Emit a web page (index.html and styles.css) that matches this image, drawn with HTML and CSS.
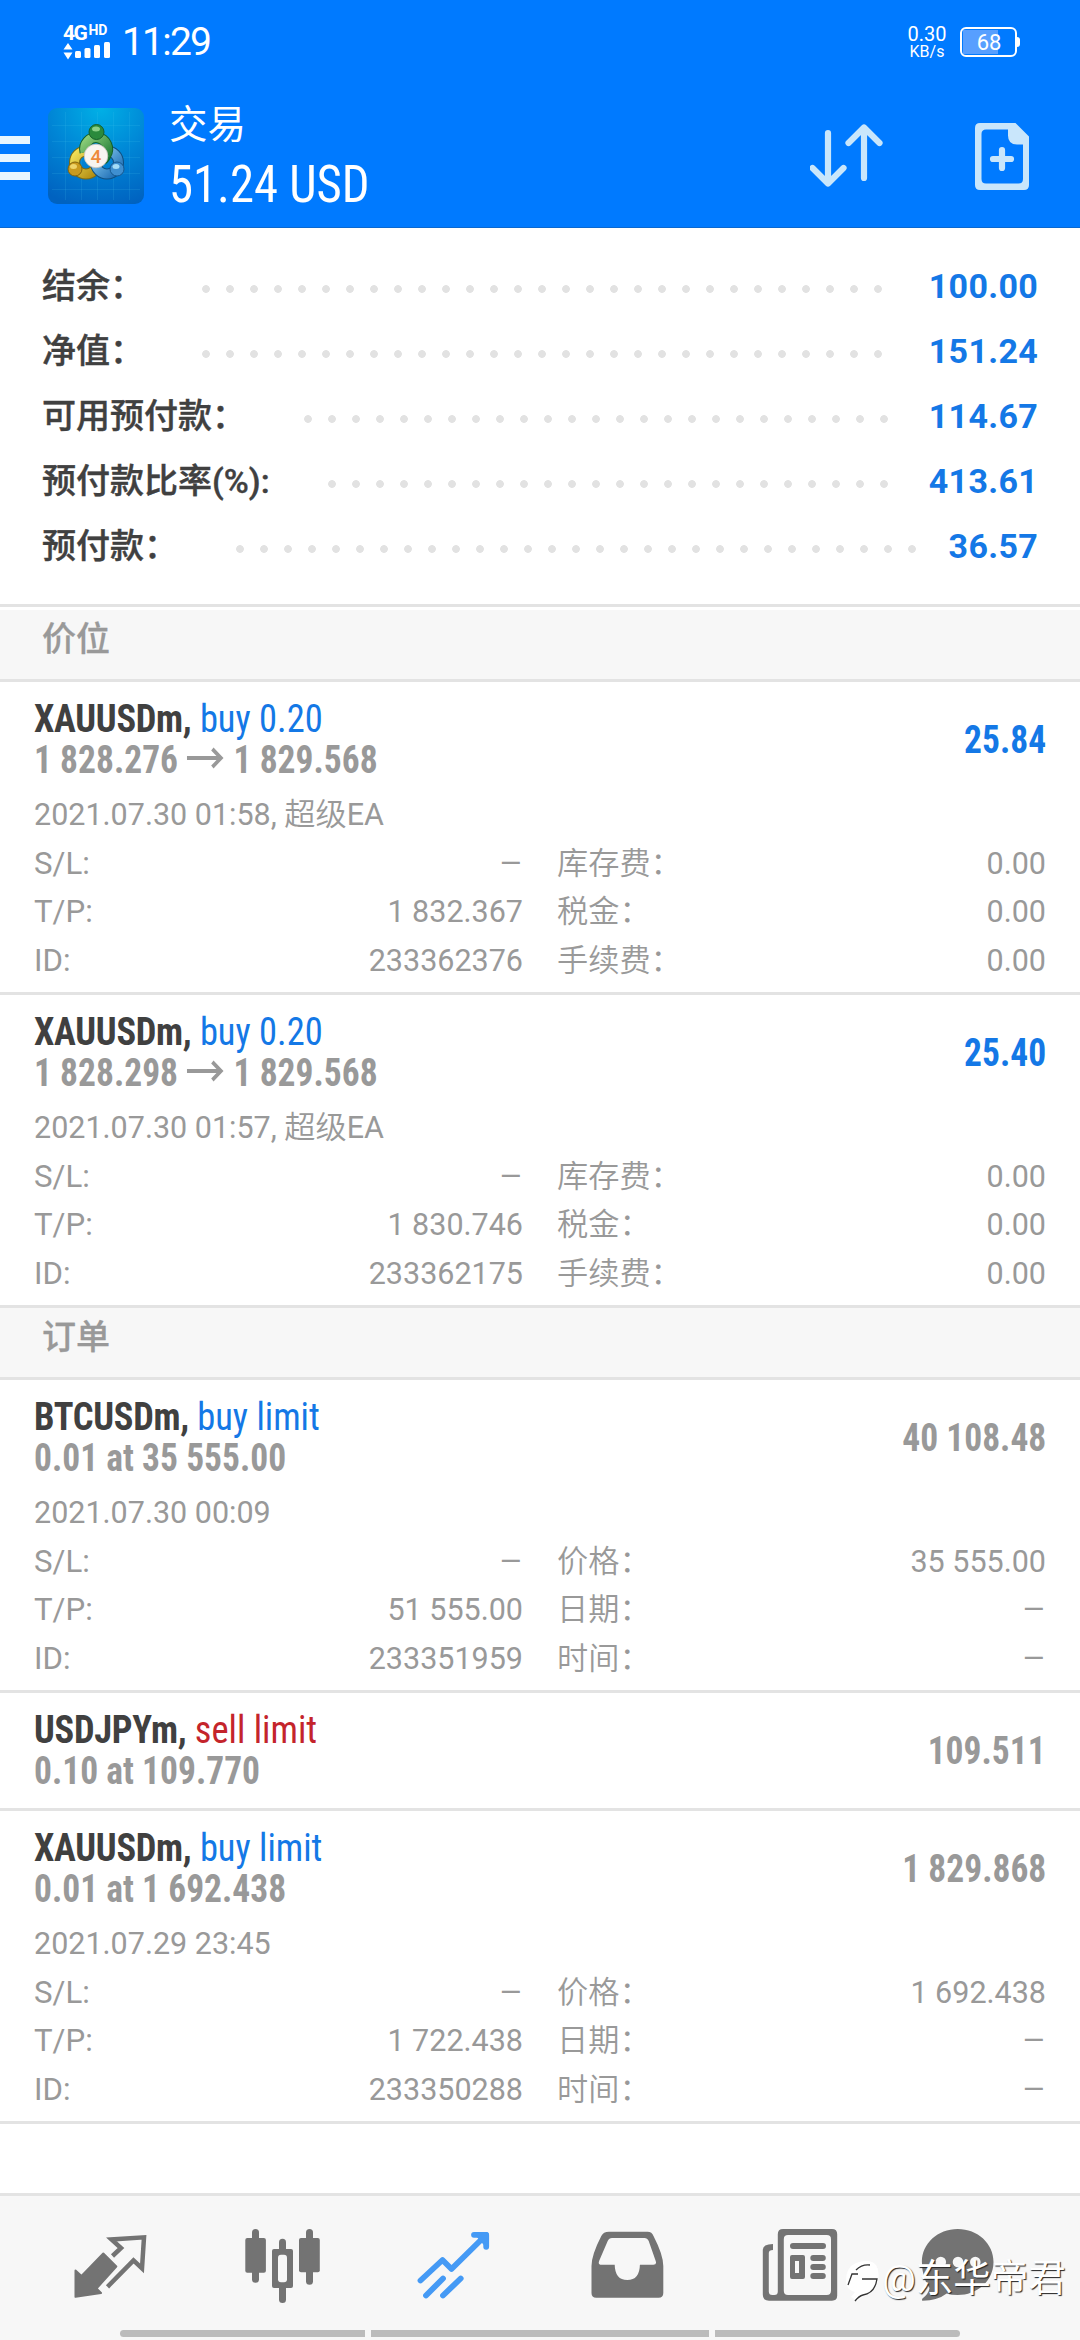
FILE: index.html
```
<!DOCTYPE html>
<html lang="zh-CN">
<head>
<meta charset="utf-8">
<title>交易</title>
<link rel="stylesheet" href="styles.css">
</head>
<body>
<div class="screen">
  <header class="header">
    <div class="status">
      <div class="signal">
        <div class="net">4G<span class="hd">HD</span></div>
        <svg width="48" height="18" viewBox="0 0 48 18" fill="#fff"><path d="M5 1 9.5 7.5H.5zM5 17.5.5 10.500h9z"/><rect x="12" y="9" width="6" height="7" rx="1.500"/><rect x="21.500" y="6" width="6" height="10" rx="1.500"/><rect x="31" y="3" width="6" height="13" rx="1.500"/><rect x="41" y="0" width="6" height="16" rx="1.500"/></svg>
      </div>
      <div class="time">11:29</div>
      <div class="speed"><span class="rate">0.30</span><span class="unit">KB/s</span></div>
      <div class="battery"><span>68</span></div>
    </div>
    <div class="appbar">
      <svg class="menu" width="30" height="44" viewBox="0 0 30 44" fill="#e8f6ff"><path d="M0 0h30v8H0zM0 18h30v8H0zM0 36h30v8H0z"/></svg>
      <svg class="logo" width="96" height="96" viewBox="0 0 96 96">
        <defs>
          <radialGradient id="bg" cx=".55" cy="0" r="1.05"><stop offset="0" stop-color="#00b0e6"/><stop offset=".5" stop-color="#0086d6"/><stop offset="1" stop-color="#0062c0"/></radialGradient>
          <linearGradient id="gr" x2="1" y2="1"><stop offset="0" stop-color="#8fd07a"/><stop offset="1" stop-color="#1e7a35"/></linearGradient>
          <linearGradient id="ye" x2="1" y2="1"><stop offset="0" stop-color="#f2e25a"/><stop offset="1" stop-color="#b08a10"/></linearGradient>
          <linearGradient id="bl" x2="1" y2="1"><stop offset="0" stop-color="#8cd0f4"/><stop offset="1" stop-color="#1c6cb4"/></linearGradient>
        </defs>
        <rect width="96" height="96" rx="9" fill="url(#bg)"/>
        <path d="M17.500 4v88M33.500 4v88M49.500 4v88M65.500 4v88M81.500 4v88M4 17.500h88M4 33.500h88M4 49.500h88M4 65.500h88M4 81.500h88" stroke="#4fd0f0" stroke-opacity=".14"/>
        <g fill="none" stroke-width="9">
          <circle cx="38" cy="54.500" r="11.500" stroke="#7a6a14" stroke-width="11"/>
          <circle cx="38" cy="54.500" r="11.500" stroke="url(#ye)"/>
          <circle cx="59" cy="54.500" r="11.500" stroke="#0f4f80" stroke-width="11"/>
          <circle cx="59" cy="54.500" r="11.500" stroke="url(#bl)"/>
          <path d="M37 44a11.500 11.500 0 1 1 21 3q-1 3-4 5" stroke="#14602a" stroke-width="11"/>
          <path d="M37 44a11.500 11.500 0 1 1 21 3q-1 3-4 5" stroke="url(#gr)"/>
        </g>
        <circle cx="48.500" cy="24" r="7.500" fill="#2b8a3c" stroke="#16602a"/>
        <ellipse cx="48" cy="21" rx="4" ry="2.500" fill="#8bcf86"/>
        <circle cx="27" cy="61" r="7" fill="#c99a1e" stroke="#80620e"/>
        <ellipse cx="25.500" cy="58.500" rx="3.500" ry="2.500" fill="#eed46a"/>
        <circle cx="69" cy="61" r="7" fill="#3f8fd0" stroke="#17588f"/>
        <ellipse cx="68" cy="58.500" rx="3.500" ry="2.500" fill="#a5dcf7"/>
        <circle cx="48" cy="48" r="11.800" fill="#f8f4f0" stroke="#c9c4bd" stroke-width=".8"/>
        <text x="48" y="54.800" text-anchor="middle" class="logo-num">4</text>
      </svg>
      <div class="heading">
        <div class="title">交易</div>
        <div class="profit-total">51.24 USD</div>
      </div>
      <svg class="sort" width="76" height="66" viewBox="810 123 76 66" fill="none" stroke="#c9e6fb" stroke-width="6.200" stroke-linecap="round" stroke-linejoin="round"><path d="M828 133v50M812.500 168l15.500 15.500L843.500 168M864 178v-50M848.500 143 864 127.500 879.500 143"/></svg>
      <svg class="add" width="54" height="67" viewBox="0 0 54 67"><path fill="#c9e6fb" fill-rule="evenodd" d="M5 0h35.500L54 13.500V62q0 5-5 5H5q-5 0-5-5V5q0-5 5-5zM11 6.500q-4.500 0-4.500 4.500v45q0 4.500 4.500 4.500h32.500q4.500 0 4.500-4.500V21.500h-6q-9 0-9-9v-6z"/><path d="M27 27v18M18 36h18" stroke="#c9e6fb" stroke-width="6.200" stroke-linecap="round"/></svg>
    </div>
  </header>

  <section class="summary">
    <div class="sum-row"><span>结余：</span><i class="dots"></i><b>100.00</b></div>
    <div class="sum-row"><span>净值：</span><i class="dots"></i><b>151.24</b></div>
    <div class="sum-row"><span>可用预付款：</span><i class="dots"></i><b>114.67</b></div>
    <div class="sum-row"><span>预付款比率(%):</span><i class="dots"></i><b>413.61</b></div>
    <div class="sum-row"><span>预付款：</span><i class="dots"></i><b>36.57</b></div>
  </section>

  <h2 class="section first">价位</h2>

  <article class="item">
    <div class="top">
      <div>
        <div class="line"><b>XAUUSDm,</b> <span class="buy">buy 0.20</span></div>
        <div class="line price">1 828.276<svg class="arrow" width="41" height="22" viewBox="0 0 41 22" fill="none" stroke="#999" stroke-width="3.800"><path d="M0 11h38M28 2l9.500 9L28 20"/></svg>1 829.568</div>
      </div>
      <div class="line value up">25.84</div>
    </div>
    <div class="details">
      <div class="date">2021.07.30 01:58, <span class="cjk">超级</span>EA</div>
      <div class="cell"><span>S/L:</span><span class="dash">–</span></div><div class="cell"><span class="cjk">库存费：</span><span>0.00</span></div>
      <div class="cell"><span>T/P:</span><span>1 832.367</span></div><div class="cell"><span class="cjk">税金：</span><span>0.00</span></div>
      <div class="cell"><span>ID:</span><span>233362376</span></div><div class="cell"><span class="cjk">手续费：</span><span>0.00</span></div>
    </div>
  </article>

  <article class="item">
    <div class="top">
      <div>
        <div class="line"><b>XAUUSDm,</b> <span class="buy">buy 0.20</span></div>
        <div class="line price">1 828.298<svg class="arrow" width="41" height="22" viewBox="0 0 41 22" fill="none" stroke="#999" stroke-width="3.800"><path d="M0 11h38M28 2l9.500 9L28 20"/></svg>1 829.568</div>
      </div>
      <div class="line value up">25.40</div>
    </div>
    <div class="details">
      <div class="date">2021.07.30 01:57, <span class="cjk">超级</span>EA</div>
      <div class="cell"><span>S/L:</span><span class="dash">–</span></div><div class="cell"><span class="cjk">库存费：</span><span>0.00</span></div>
      <div class="cell"><span>T/P:</span><span>1 830.746</span></div><div class="cell"><span class="cjk">税金：</span><span>0.00</span></div>
      <div class="cell"><span>ID:</span><span>233362175</span></div><div class="cell"><span class="cjk">手续费：</span><span>0.00</span></div>
    </div>
  </article>

  <h2 class="section">订单</h2>

  <article class="item">
    <div class="top">
      <div>
        <div class="line"><b>BTCUSDm,</b> <span class="buy">buy limit</span></div>
        <div class="line price">0.01 at 35 555.00</div>
      </div>
      <div class="line value">40 108.48</div>
    </div>
    <div class="details">
      <div class="date">2021.07.30 00:09</div>
      <div class="cell"><span>S/L:</span><span class="dash">–</span></div><div class="cell"><span class="cjk">价格：</span><span>35 555.00</span></div>
      <div class="cell"><span>T/P:</span><span>51 555.00</span></div><div class="cell"><span class="cjk">日期：</span><span class="dash">–</span></div>
      <div class="cell"><span>ID:</span><span>233351959</span></div><div class="cell"><span class="cjk">时间：</span><span class="dash">–</span></div>
    </div>
  </article>

  <article class="item short">
    <div class="top">
      <div>
        <div class="line"><b>USDJPYm,</b> <span class="sell">sell limit</span></div>
        <div class="line price">0.10 at 109.770</div>
      </div>
      <div class="line value">109.511</div>
    </div>
  </article>

  <article class="item">
    <div class="top">
      <div>
        <div class="line"><b>XAUUSDm,</b> <span class="buy">buy limit</span></div>
        <div class="line price">0.01 at 1 692.438</div>
      </div>
      <div class="line value">1 829.868</div>
    </div>
    <div class="details">
      <div class="date">2021.07.29 23:45</div>
      <div class="cell"><span>S/L:</span><span class="dash">–</span></div><div class="cell"><span class="cjk">价格：</span><span>1 692.438</span></div>
      <div class="cell"><span>T/P:</span><span>1 722.438</span></div><div class="cell"><span class="cjk">日期：</span><span class="dash">–</span></div>
      <div class="cell"><span>ID:</span><span>233350288</span></div><div class="cell"><span class="cjk">时间：</span><span class="dash">–</span></div>
    </div>
  </article>

  <nav class="nav">
    <div class="tabs">
      <svg width="76" height="80" viewBox="72 2226 76 80"><path fill="#737373" stroke="#737373" stroke-width="2" stroke-linejoin="round" d="M75.500 2270.500l6 5.500 21.800-22.500 13 13L96.500 2288.500l4.500 4.500-25.500 3.800z"/><path fill="none" stroke="#737373" stroke-width="4.500" d="M112.500 2256l8.500-8-9.500-8.500 32.500-2.200-2 31-8.500-8-26 26.500"/></svg>
      <svg width="76" height="80" viewBox="244 2226 76 80"><g fill="#737373"><rect x="244.300" y="2238" width="20.600" height="34.700" rx="2"/><rect x="251" y="2229" width="7" height="53.700" rx="3.500"/><rect x="298" y="2238" width="20.800" height="34.300" rx="2"/><rect x="305" y="2229" width="7" height="55.700" rx="3.500"/><rect x="278" y="2238.700" width="7" height="64.300" rx="3.500"/><rect x="271" y="2249" width="21" height="39" rx="2"/></g><rect x="277" y="2254.700" width="9" height="27.500" rx="3" fill="#f7f7f7"/></svg>
      <svg width="76" height="80" viewBox="417 2226 76 80" fill="none" stroke="#459af5" stroke-width="5.800" stroke-linecap="round" stroke-linejoin="round"><path d="M420.500 2280.500l22-20.500 9 9L486 2235M474 2234.800h12.200v12M426 2295.500l17-17M443 2295.500l17.700-17"/><path fill="#459af5" d="M479 2235h7v8z"/></svg>
      <svg width="76" height="80" viewBox="589 2226 76 80"><path fill="#737373" fill-rule="evenodd" d="M608 2231.700h38.500q4.500 0 6 4.300 9.800 19 9.800 30v27q0 4.700-4.700 4.700h-62.400q-4.700 0-4.700-4.700v-27q0-11 9.800-30 2-4.300 7.700-4.300zM611 2238q-3 0-4.300 3l-8.600 20q-1.300 3.700 2.400 3.700h13.200q.3 15.300 12.600 15.300 12.300 0 12.600-15.300h13.400q3.700 0 2.400-3.700l-7-20q-1.300-3-4.300-3z"/></svg>
      <svg width="76" height="80" viewBox="762 2226 76 80"><path fill="#737373" fill-rule="evenodd" d="M783 2229h49q5.200 0 5.200 5.200v61.300q0 5.200-5.200 5.200h-63q-6.200 0-6.200-6.200V2250q0-6 10.200-6v6q-4.200 0-4.200 3v38.500q0 3.500 3.500 3.500h2q3.500 0 3.500-3.500v-57.300q0-5.200 5.200-5.200zM788 2235q-4.200 0-4.200 4.200v51.600q0 4.200 4.200 4.200h38.800q4.200 0 4.200-4.200v-51.600q0-4.200-4.200-4.200z"/><path fill="#737373" fill-rule="evenodd" d="M792 2255h11q2 0 2 2v20q0 2-2 2h-11q-2 0-2-2v-20q0-2 2-2zm3 6v12h4v-12z"/><path d="M793 2246h30M813.300 2258h9.500M813.300 2267h9.500M813.300 2276h9.500" stroke="#737373" stroke-width="6" stroke-linecap="round"/></svg>
      <svg class="chat" width="76" height="80" viewBox="919 2226 76 80"><path fill="#737373" d="M957.700 2229c20 0 35.800 14.500 35.800 33s-16 33-35.800 33q-6 0-11-1.500-9 7-24.200 7.200-1-.5 0-2.200 6-4.500 7-10.500-7.600-10.500-7.600-26c0-18.500 15.800-33 35.800-33z"/><g fill="#f7f7f7"><circle cx="940.800" cy="2262" r="5.300"/><circle cx="958" cy="2262" r="5.300"/><circle cx="975.300" cy="2262" r="5.300"/></g></svg>
    </div>
    <div class="gesture"><i class="end left"></i><i class="mid"></i><i class="end right"></i></div>
    <div class="watermark">
      <svg width="38" height="46" viewBox="0 0 38 46"><path fill="#fff" d="M12 2q14-5 20 2 4 6 2 16-3 11-13 14l-8 6-6-4 4-5Q2 29 2 20 2 6 12 2z"/><path fill="none" stroke="#333" stroke-width="1.300" d="M12 9q6-6 14-5M4 24l4-11h6M18 18h15q-2 14-14 16-4 1-8 6"/></svg>
      <span>@东华帝君</span>
    </div>
  </nav>
</div>
</body>
</html>
```
FILE: styles.css
```
* { box-sizing: border-box; }

body {
  margin: 0;
  background: #fff;
  font-family: Roboto, "Noto Sans CJK SC", sans-serif;
}

svg { display: block; flex: none; }

.screen {
  width: 1080px;
  height: 2340px;
  display: flex;
  flex-direction: column;
  overflow: hidden;
}

/* header */
.header {
  height: 228px;
  background: #007aff;
  border-bottom: 1px solid #0a68d0;
  color: #fff;
}

.status {
  height: 84px;
  display: flex;
  align-items: flex-start;
  padding: 0 63px 0 63px;
}

.signal { width: 48px; padding-top: 23px; }

.net {
  height: 19px;
  display: flex;
  align-items: flex-start;
  font: 700 21px/21px Roboto, sans-serif;
  letter-spacing: -1.5px;
}

.hd { font-size: 14px; line-height: 15px; letter-spacing: 0; margin-left: 2px; }

.time {
  margin-left: 11px;
  font-size: 39px;
  line-height: 85px;
  letter-spacing: -1.800px;
}

.speed {
  width: 40px;
  margin-left: auto;
  margin-right: 13px;
  padding-top: 24px;
  display: flex;
  flex-direction: column;
  align-items: center;
  white-space: nowrap;
}

.rate { font-size: 20px; line-height: 20px; }
.unit { font-size: 16px; line-height: 16px; }

.battery {
  position: relative;
  width: 57px;
  height: 30px;
  margin-top: 27px;
  padding: 1px 0 0 1px;
  border: 2px solid #fff;
  border-radius: 6px;
  background: linear-gradient(#579fff, #579fff) 1px 1px / 35px 24px no-repeat;
  text-align: center;
  font: 400 22px/25px Roboto, sans-serif;
}

.battery::after {
  content: "";
  position: absolute;
  left: 55px;
  top: 8px;
  width: 3px;
  height: 10px;
  border-radius: 0 3px 3px 0;
  background: #fff;
}

.appbar { height: 143px; display: flex; }
.menu { margin-top: 52px; }
.logo { margin: 24px 0 0 18px; }
.logo-num { font: 500 19px Roboto, sans-serif; fill: #ee8a3c; }
.heading { padding: 14px 0 0 25px; width: 666px; }
.title { font-size: 38.500px; line-height: 54px; }

.profit-total {
  font: 400 51px/65px "Roboto Condensed", Roboto, sans-serif;
  transform: scaleX(.955);
  transform-origin: left;
}

.sort { margin-top: 39px; }
.add { margin: 39px 0 0 89px; }

/* account summary */
.summary {
  height: 379px;
  padding: 26px 42px 0;
  border-bottom: 3px solid #e3e3e3;
}

.sum-row {
  height: 65px;
  display: flex;
  font-size: 34px;
  line-height: 65px;
  font-weight: 500;
  color: #404040;
}

.sum-row span { -webkit-text-stroke: .4px; }
.sum-row b { color: #1478e6; font-weight: 700; letter-spacing: .3px; }

.dots {
  flex: 1;
  height: 8px;
  margin: 31px 33px 0 58px;
  background: radial-gradient(circle at 4px 4px, #e2e2e2 3.500px, transparent 4.200px) 0 0 / 24px 8px repeat-x;
}

.section {
  height: 72px;
  margin: 0;
  padding-left: 42px;
  background: #f7f7f7;
  border-bottom: 3px solid #e3e3e3;
  color: #999;
  font-size: 34px;
  line-height: 58px;
  font-weight: 500;
  -webkit-text-stroke: .3px;
}

.section.first { height: 75px; border-top: 3px solid #fff; }

/* positions and orders */
.item {
  height: 313px;
  padding: 17px 34px 0;
  border-bottom: 3px solid #e3e3e3;
  color: #999;
}

.item.short { height: 118px; }

.top { display: flex; justify-content: space-between; align-items: center; }

.line {
  font: 400 39px/41px "Roboto Condensed", Roboto, sans-serif;
  transform: scaleX(.935);
  transform-origin: left;
  white-space: nowrap;
}

.line b { color: #404040; font-weight: 700; letter-spacing: -.300px; }
.price, .value { font-weight: 700; transform: scaleX(.91); }
.value { transform-origin: right; }
.buy, .up { color: #1478e6; }
.sell { color: #c4242b; }

.arrow { display: inline-block; margin: 0 10px 0 10px; vertical-align: 4px; }

.details {
  display: grid;
  grid-template-columns: 489px 489px;
  column-gap: 34px;
  grid-auto-rows: 48.670px;
  margin-top: 10px;
  font-size: 30.500px;
  line-height: 48.670px;
}

.date { grid-column: 1 / 3; }
.cell { display: flex; justify-content: space-between; }
.cell span:first-child { font-size: 31.200px; }
.cjk { font-size: 31.200px; font-weight: 350; }
.dash { transform: scaleX(1.2); transform-origin: right; }

/* bottom navigation */
.nav {
  position: relative;
  height: 147px;
  margin-top: auto;
  background: #f7f7f7;
  border-top: 3px solid #e3e3e3;
}

.tabs { display: flex; gap: 96.500px; padding: 30px 0 0 72px; }
.chat { margin-left: -15.500px; }

.gesture { display: flex; gap: 6px; height: 7px; margin: 24px 120px 0; }
.gesture i { background: #bbb; }
.end { width: 245px; }
.mid { flex: 1; }
.left { border-radius: 4px 0 0 4px; }
.right { border-radius: 0 4px 4px 0; }

.watermark {
  position: absolute;
  left: 844px;
  top: 65px;
  display: flex;
  font-size: 37.500px;
  line-height: 34px;
  color: #fff;
  text-shadow: 1px 1px 1px #222;
  white-space: nowrap;
}
```
